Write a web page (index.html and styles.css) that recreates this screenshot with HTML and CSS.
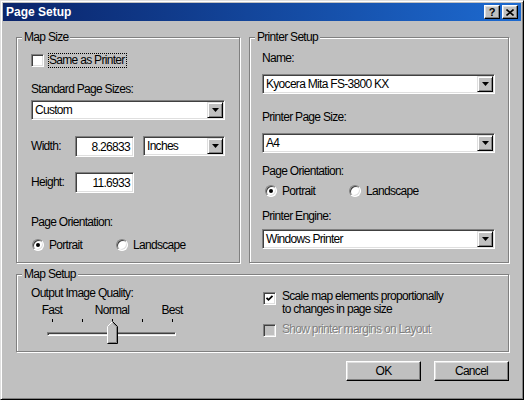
FILE: index.html
```html
<!DOCTYPE html>
<html>
<head>
<meta charset="utf-8">
<title>Page Setup</title>
<link rel="stylesheet" href="styles.css">
</head>
<body>
<div class="window">
  <div class="titlebar">
    <span class="title">Page Setup</span>
    <div class="caption-btns">
      <span class="cap-btn help">?</span>
      <span class="cap-btn close"><svg width="8" height="7" viewBox="0 0 8 7"><path d="M0.5 0.5 L7.5 6.5 M7.5 0.5 L0.5 6.5" stroke="#000" stroke-width="1.6" fill="none"/></svg></span>
    </div>
  </div>
  <div class="content">
    <div class="top-row">
      <div class="group map-size">
        <div class="group-title">Map Size</div>
        <div class="check same-printer"><span class="box"></span><span class="focus">Same as Printer</span></div>
        <div class="label std-label">Standard Page Sizes:</div>
        <div class="combo std-combo"><span class="combo-text">Custom</span><span class="combo-btn"><svg width="7" height="4" viewBox="0 0 7 4"><path d="M0 0H7L3.5 4Z" fill="#000"/></svg></span></div>
        <div class="dim-row width-row">
          <span class="dim-label">Width:</span>
          <span class="edit">8.26833</span>
          <div class="combo units"><span class="combo-text">Inches</span><span class="combo-btn"><svg width="7" height="4" viewBox="0 0 7 4"><path d="M0 0H7L3.5 4Z" fill="#000"/></svg></span></div>
        </div>
        <div class="dim-row height-row">
          <span class="dim-label">Height:</span>
          <span class="edit">11.6933</span>
        </div>
        <div class="label orient-label">Page Orientation:</div>
        <div class="radio-row ms-radios">
          <div class="radio"><span class="circle on"></span><span>Portrait</span></div>
          <div class="radio"><span class="circle"></span><span>Landscape</span></div>
        </div>
      </div>
      <div class="group printer-setup">
        <div class="group-title">Printer Setup</div>
        <div class="label name-label">Name:</div>
        <div class="combo name-combo"><span class="combo-text">Kyocera Mita FS-3800 KX</span><span class="combo-btn"><svg width="7" height="4" viewBox="0 0 7 4"><path d="M0 0H7L3.5 4Z" fill="#000"/></svg></span></div>
        <div class="label psize-label">Printer Page Size:</div>
        <div class="combo psize-combo"><span class="combo-text">A4</span><span class="combo-btn"><svg width="7" height="4" viewBox="0 0 7 4"><path d="M0 0H7L3.5 4Z" fill="#000"/></svg></span></div>
        <div class="label porient-label">Page Orientation:</div>
        <div class="radio-row ps-radios">
          <div class="radio"><span class="circle on"></span><span>Portrait</span></div>
          <div class="radio"><span class="circle"></span><span>Landscape</span></div>
        </div>
        <div class="label engine-label">Printer Engine:</div>
        <div class="combo engine-combo"><span class="combo-text">Windows Printer</span><span class="combo-btn"><svg width="7" height="4" viewBox="0 0 7 4"><path d="M0 0H7L3.5 4Z" fill="#000"/></svg></span></div>
      </div>
    </div>
    <div class="group map-setup">
      <div class="group-title">Map Setup</div>
      <div class="setup-row">
        <div class="setup-left">
          <div class="label quality-label">Output Image Quality:</div>
          <div class="slider">
            <div class="slider-labels">
              <span>Fast</span><span></span><span>Normal</span><span></span><span>Best</span>
            </div>
            <div class="ticks"><span></span><span></span><span></span><span></span><span></span></div>
            <div class="track"></div>
            <svg class="thumb" width="11" height="23" viewBox="0 0 11 23">
              <path d="M0.5 5.5 L5.5 0.5 L10.5 5.5 V22.5 H0.5 Z" fill="#c0c0c0"/>
              <path d="M0.5 22 V5.5 L5.5 0.5" stroke="#fff" fill="none"/>
              <path d="M5.5 0.5 L10.5 5.5 V22.5 H0.5" stroke="#000" fill="none"/>
              <path d="M6 2.2 L9.5 5.8 V21.5 H1.5" stroke="#808080" fill="none"/>
            </svg>
          </div>
        </div>
        <div class="setup-right">
          <div class="check scale-check"><span class="box checked"><svg width="9" height="9" viewBox="0 0 9 9"><path d="M1.5 3.8 L3.5 5.8 L7.5 1.8" stroke="#000" stroke-width="1.8" fill="none"/></svg></span><span class="check-text">Scale map elements proportionally<br>to changes in page size</span></div>
          <div class="check margins-check disabled"><span class="box"></span><span class="check-text">Show printer margins on Layout</span></div>
        </div>
      </div>
    </div>
    <div class="buttons">
      <div class="btn">OK</div>
      <div class="btn">Cancel</div>
    </div>
  </div>
</div>
</body>
</html>
```

FILE: styles.css
```css
* { box-sizing: border-box; }
html, body { margin: 0; padding: 0; }
body {
  width: 524px;
  height: 400px;
  overflow: hidden;
  background: #c0c0c0;
  font-family: "Liberation Sans", Arial, sans-serif;
  font-size: 12px;
  letter-spacing: -0.7px;
  color: #000;
}
.window {
  width: 524px;
  height: 400px;
  border: 1px solid;
  border-color: #dfdfdf #000 #000 #dfdfdf;
  box-shadow: inset 1px 1px #fff, inset -1px -1px #808080;
  padding: 2px;
  background: #c0c0c0;
  display: flex;
  flex-direction: column;
}
.titlebar {
  height: 18px;
  flex: none;
  background: linear-gradient(to right, #0a246a, #1d6ad0);
  display: flex;
  align-items: center;
  justify-content: space-between;
  padding: 0 3px 0 3px;
}
.title {
  color: #fff;
  font-family: "Liberation Sans", Arial, sans-serif;
  font-weight: bold;
  font-size: 12px;
  letter-spacing: 0;
  line-height: 18px;
}
.caption-btns { display: flex; gap: 2px; }
.cap-btn {
  width: 16px;
  height: 14px;
  background: #c0c0c0;
  border: 1px solid;
  border-color: #fff #000 #000 #fff;
  box-shadow: inset -1px -1px #808080, inset 1px 1px #dfdfdf;
  display: flex;
  align-items: center;
  justify-content: center;
}
.help {
  font-family: "Liberation Sans", Arial, sans-serif;
  font-weight: bold;
  font-size: 11px;
  letter-spacing: 0;
  line-height: 12px;
}
.content {
  flex: 1;
  padding: 16px 12px 0 13px;
  display: flex;
  flex-direction: column;
}
.top-row { display: flex; gap: 9px; }
.group {
  border: 1px solid #808080;
  box-shadow: inset 1px 1px #fff, 1px 1px #fff;
  display: flex;
  flex-direction: column;
  align-items: flex-start;
}
.group-title {
  margin-top: -8px;
  padding: 0 2px;
  background: #c0c0c0;
  line-height: 14px;
}
.label { line-height: 14px; }

/* Map Size */
.map-size { width: 224px; padding: 0 14px 10px 14px; }
.map-size .group-title { margin-left: -9px; }
.same-printer { margin-top: 9px; }
.std-label { margin-top: 14px; }
.std-combo { margin-top: 4px; width: 194px; }
.dim-row { display: flex; align-items: flex-start; }
.width-row { margin-top: 16px; }
.height-row { margin-top: 15px; }
.dim-label { width: 44px; height: 21px; line-height: 21px; }
.units { width: 82px; margin-left: 9px; }
.orient-label { margin-top: 22px; }
.ms-radios { margin-top: 9px; margin-left: 1px; }

/* Printer Setup */
.printer-setup { width: 260px; padding: 0 13px 10px 12px; }
.printer-setup .group-title { margin-left: -7px; }
.printer-setup .combo { width: 233px; }
.name-label { margin-top: 7px; }
.name-combo { margin-top: 9px; }
.psize-label { margin-top: 16px; }
.psize-combo { margin-top: 9px; }
.porient-label { margin-top: 11px; }
.ps-radios { margin-top: 6px; margin-left: 3px; }
.engine-label { margin-top: 11px; }
.engine-combo { margin-top: 6px; }

/* controls */
.check { display: flex; align-items: center; }
.box {
  width: 13px;
  height: 13px;
  flex: none;
  background: #fff;
  border: 1px solid;
  border-color: #808080 #fff #fff #808080;
  box-shadow: inset 1px 1px #404040, inset -1px -1px #dfdfdf;
  display: flex;
  align-items: center;
  justify-content: center;
}
.focus {
  margin-left: 4px;
  padding: 0 1px 0 0;
  border: 1px dotted #000;
  line-height: 13px;
}
.combo {
  height: 20px;
  background: #fff;
  border: 1px solid;
  border-color: #808080 #fff #fff #808080;
  box-shadow: inset 1px 1px #404040, inset -1px -1px #dfdfdf;
  padding: 1px;
  display: flex;
}
.combo-text {
  flex: 1;
  display: flex;
  align-items: center;
  padding-left: 2px;
  white-space: nowrap;
  overflow: hidden;
}
.combo-btn {
  width: 16px;
  flex: none;
  background: #c0c0c0;
  border: 1px solid;
  border-color: #dfdfdf #000 #000 #dfdfdf;
  box-shadow: inset 1px 1px #fff, inset -1px -1px #808080;
  display: flex;
  align-items: center;
  justify-content: center;
}
.edit {
  width: 59px;
  height: 21px;
  background: #fff;
  border: 1px solid;
  border-color: #808080 #fff #fff #808080;
  box-shadow: inset 1px 1px #404040, inset -1px -1px #dfdfdf;
  display: flex;
  align-items: center;
  justify-content: flex-end;
  padding-right: 3px;
}
.radio-row { display: flex; height: 14px; align-items: center; }
.radio { display: flex; align-items: center; gap: 5px; }
.radio:first-child { width: 84px; }
.circle {
  width: 12px;
  height: 12px;
  border-radius: 50%;
  background: #fff;
  border: 1px solid;
  border-color: #808080 #fff #fff #808080;
  box-shadow: inset 1px 1px #404040, inset -1px -1px #dfdfdf;
  display: flex;
  align-items: center;
  justify-content: center;
}
.circle.on::after {
  content: "";
  width: 4px;
  height: 4px;
  border-radius: 50%;
  background: #000;
}

/* Map Setup */
.map-setup { margin-top: 11px; padding: 0 14px 14px 14px; align-items: stretch; }
.map-setup .group-title { margin-left: -9px; align-self: flex-start; }
.setup-row { display: flex; }
.setup-left { width: 232px; flex: none; }
.quality-label { margin-top: 5px; }
.slider { position: relative; margin: 3px 0 0 6px; width: 150px; }
.slider-labels { display: flex; height: 14px; line-height: 14px; }
.slider-labels span { width: 30px; display: flex; justify-content: center; white-space: nowrap; }
.ticks { display: flex; gap: 29px; margin: 2px 0 0 15px; height: 3px; }
.ticks span { width: 1px; height: 3px; background: #000; }
.track {
  margin: 10px 0 0 10px;
  width: 129px;
  height: 4px;
  border: 1px solid;
  border-color: #808080 #fff #fff #808080;
  box-shadow: inset 1px 1px #404040, inset -1px -1px #dfdfdf;
}
.thumb { position: absolute; left: 70px; top: 18px; display: block; }
.setup-right { display: flex; flex-direction: column; }
.scale-check { margin-top: 9px; align-items: flex-start; }
.scale-check .box { margin-top: 2px; }
.margins-check { margin-top: 7px; align-items: flex-start; }
.margins-check .box { margin-top: 1px; background: #c0c0c0; }
.check-text { margin-left: 6px; line-height: 13px; }
.disabled .check-text { color: #808080; text-shadow: 1px 1px 0 #fff; }

/* buttons */
.buttons { display: flex; justify-content: flex-end; gap: 13px; margin-top: 9px; }
.btn {
  width: 75px;
  height: 20px;
  background: #c0c0c0;
  border: 1px solid;
  border-color: #fff #000 #000 #fff;
  box-shadow: inset -1px -1px #808080, inset 1px 1px #dfdfdf;
  display: flex;
  align-items: center;
  justify-content: center;
}
```
